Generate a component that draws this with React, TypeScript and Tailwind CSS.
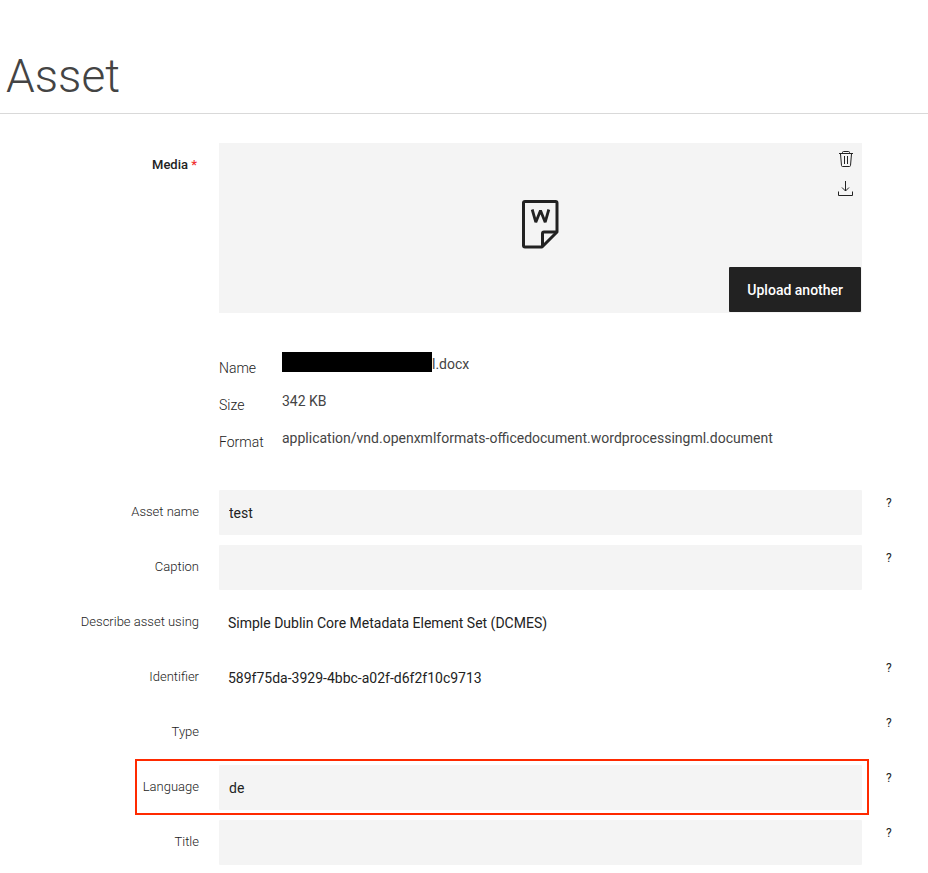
import React from 'react';
import clsx from 'clsx';

type Field = {
  id: string;
  label: string;
  value?: string;
  kind: 'input' | 'text';
  help?: boolean;
  highlighted?: boolean;
};

const details = [
  { label: 'Name', value: 'l.docx', redacted: true },
  { label: 'Size', value: '342 KB' },
  {
    label: 'Format',
    value: 'application/vnd.openxmlformats-officedocument.wordprocessingml.document',
  },
];

const fields: Field[] = [
  { id: 'asset-name', label: 'Asset name', value: 'test', kind: 'input', help: true },
  { id: 'caption', label: 'Caption', value: '', kind: 'input', help: true },
  { id: 'schema', label: 'Describe asset using', value: 'Simple Dublin Core Metadata Element Set (DCMES)', kind: 'text' },
  { id: 'identifier', label: 'Identifier', value: '589f75da-3929-4bbc-a02f-d6f2f10c9713', kind: 'text', help: true },
  { id: 'type', label: 'Type', value: '', kind: 'text', help: true },
  { id: 'language', label: 'Language', value: 'de', kind: 'input', help: true, highlighted: true },
  { id: 'title', label: 'Title', value: '', kind: 'input', help: true },
];

const rowGrid = 'grid grid-cols-[199px_minmax(0,1fr)_46px] gap-x-5';

const WordIcon = () => (
  <svg width="38" height="50" viewBox="0 0 38 50" fill="none" stroke="#222" strokeWidth="3" strokeLinejoin="round" aria-hidden="true">
    <path d="M4 2.5H34.5Q36 2.5 36 4V33L21 48H4Q2.5 48 2.5 46.5V4Q2.5 2.5 4 2.5Z" />
    <path d="M36 33H23Q21.5 33 21.5 34.5V48" />
    <path d="M11.2 10.5L14.8 23.2L19.5 11.5L24.2 23.2L27.8 10.5" strokeWidth="2.8" strokeLinejoin="bevel" />
  </svg>
);

const TrashIcon = () => (
  <svg width="16" height="18" viewBox="0 0 16 18" fill="none" stroke="#222" aria-hidden="true">
    <path d="M1 3.5H15M4.5 3.5V2.5Q4.5 1.5 5.5 1.5H10.5Q11.5 1.5 11.5 2.5V3.5" />
    <path d="M2.5 4L3.5 15.5Q3.6 16.5 4.5 16.5H11.5Q12.4 16.5 12.5 15.5L13.5 4" />
    <path d="M6.5 6V14M9.5 6V14" />
  </svg>
);

const DownloadIcon = () => (
  <svg width="16" height="18" viewBox="0 0 16 18" fill="none" stroke="#222" aria-hidden="true">
    <path d="M7.5 1V11M4 7.5L7.5 11L11 7.5" />
    <path d="M.5 11.5V15.5H14.5V11.5" />
  </svg>
);

const FieldRow = ({ field }: { field: Field }) => (
  <div className={clsx(rowGrid, 'relative')}>
    <label htmlFor={field.id} className="pt-3 text-right text-[13px] leading-5 font-light">
      {field.label}
    </label>
    {field.kind === 'input' ? (
      <input
        id={field.id}
        type="text"
        defaultValue={field.value}
        className="h-[45px] w-full rounded-[1px] bg-[#f4f4f4] px-2.5 text-sm text-[#222] outline-none"
      />
    ) : (
      <output id={field.id} className="block h-[45px] px-[9px] text-sm leading-[46px] text-[#222]">
        {field.value}
      </output>
    )}
    {field.help && (
      <button type="button" aria-label={`Help for ${field.label}`} className="self-start pt-[3px] pl-1 text-left text-xs leading-5">
        ?
      </button>
    )}
    {field.highlighted && (
      <div className="pointer-events-none absolute -top-1.5 right-[59px] -bottom-[5px] left-[135px] border-2 border-[#ff2a00]" />
    )}
  </div>
);

const App = () => {
  return (
    <main className="min-h-screen bg-white pb-2 font-['Roboto','Liberation_Sans',sans-serif] text-[#222]">
      <header className="border-b border-[#d9d9d9] px-1.5 pt-11 pb-[5px]">
        <h1 className="text-[46px] leading-16 font-light text-[#444]">Asset</h1>
      </header>

      <form className="pt-[29px]" onSubmit={(e) => e.preventDefault()}>
        <section className={rowGrid}>
          <span className="pt-3 pr-0.5 text-right text-[13px] leading-5 font-medium">
            Media <span className="text-[#f03030]">*</span>
          </span>
          <div className="grid h-[170px] grid-cols-3 bg-[#f4f4f4]">
            <div className="col-start-2 flex items-center justify-center pb-2">
              <WordIcon />
            </div>
            <div className="flex flex-col items-end justify-between pr-px pb-px">
              <div className="flex flex-col gap-3 pt-[7px] pr-[7px]">
                <button type="button" aria-label="Delete"><TrashIcon /></button>
                <button type="button" aria-label="Download"><DownloadIcon /></button>
              </div>
              <button type="button" className="h-[45px] rounded-[1px] bg-[#222] px-[18px] text-sm font-medium text-white">
                Upload another
              </button>
            </div>
          </div>
        </section>

        <dl className="mt-[35px] mb-[31px] ml-[219px] text-sm">
          {details.map((item) => (
            <div key={item.label} className="flex h-[37px]">
              <dt className="w-[63px] pt-2 leading-6 font-light">{item.label}</dt>
              <dd className="flex items-start pt-1 leading-6 text-[#444]">
                {item.redacted && <span className="h-5 w-[150px] bg-black" />}
                {item.value}
              </dd>
            </div>
          ))}
        </dl>

        <div className="flex flex-col gap-2.5">
          {fields.map((field) => (
            <FieldRow key={field.id} field={field} />
          ))}
        </div>
      </form>
    </main>
  );
};

export default App;
